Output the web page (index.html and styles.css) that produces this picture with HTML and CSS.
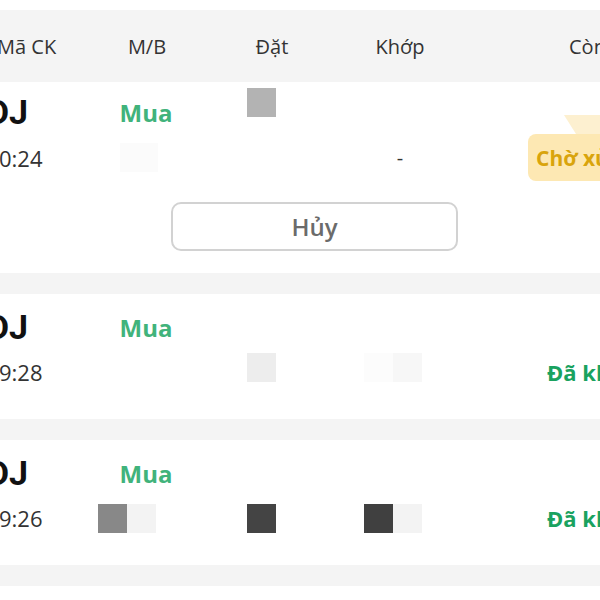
FILE: index.html
```
<!DOCTYPE html>
<html lang="vi">
<head>
<meta charset="utf-8">
<title>Sổ lệnh</title>
<link rel="stylesheet" href="styles.css">
</head>
<body>
<div class="page">
  <div class="table">
    <div class="head line">
      <div class="cell c1 h-sym">Mã CK</div>
      <div class="cell c2">M/B</div>
      <div class="cell c3">Đặt</div>
      <div class="cell c4">Khớp</div>
      <div class="cell c5 h-rest">Còn lại</div>
    </div>

    <div class="order first">
      <div class="line l1">
        <div class="cell c1 sym">DJ</div>
        <div class="cell c2 side">Mua</div>
        <div class="cell c3 masked"><span class="blk at-c3 up g-b3"></span></div>
        <div class="cell c4"></div>
        <div class="cell c5"></div>
      </div>
      <div class="line l2">
        <div class="cell c1 time">0:24</div>
        <div class="cell c2 masked"><span class="blk at-c2b g-fb wide"></span></div>
        <div class="cell c3"></div>
        <div class="cell c4 dash">-</div>
        <div class="cell c5"><span class="badge"><span class="tail"></span>Chờ xử lý</span></div>
      </div>
      <div class="actions"><button class="cancel" type="button">Hủy</button></div>
    </div>
    <div class="gap"></div>

    <div class="order">
      <div class="line l1">
        <div class="cell c1 sym">DJ</div>
        <div class="cell c2 side">Mua</div>
        <div class="cell c3"></div>
        <div class="cell c4"></div>
        <div class="cell c5"></div>
      </div>
      <div class="line l2">
        <div class="cell c1 time">9:28</div>
        <div class="cell c2"></div>
        <div class="cell c3 masked"><span class="blk at-c3 lift g-ed"></span></div>
        <div class="cell c4 masked"><span class="blk at-c4 lift g-fd"></span><span class="blk lift g-f7"></span></div>
        <div class="cell c5"><span class="status">Đã khớp</span></div>
      </div>
    </div>
    <div class="gap"></div>

    <div class="order">
      <div class="line l1">
        <div class="cell c1 sym">DJ</div>
        <div class="cell c2 side">Mua</div>
        <div class="cell c3"></div>
        <div class="cell c4"></div>
        <div class="cell c5"></div>
      </div>
      <div class="line l2">
        <div class="cell c1 time">9:26</div>
        <div class="cell c2 masked"><span class="blk at-c2 g-88"></span><span class="blk g-f3"></span></div>
        <div class="cell c3 masked"><span class="blk at-c3 g-44"></span></div>
        <div class="cell c4 masked"><span class="blk at-c4 g-40"></span><span class="blk g-f3"></span></div>
        <div class="cell c5"><span class="status">Đã khớp</span></div>
      </div>
    </div>
    <div class="gap"></div>
  </div>
</div>
</body>
</html>
```
FILE: styles.css
```
html, body {
  margin: 0;
  padding: 0;
  background: #ffffff;
}

body {
  font-family: "Open Sans", "Noto Sans", sans-serif;
  color: #333333;
}

.page {
  width: 600px;
  height: 600px;
  overflow: hidden;
  padding-top: 10px;
  box-sizing: border-box;
}

.table {
  width: 640px;
}

.line {
  display: grid;
  grid-template-columns: 96px 102px 148px 108px 186px;
}

.cell {
  display: flex;
  align-items: center;
  justify-content: center;
  white-space: nowrap;
  min-width: 0;
}

.c1 {
  justify-content: flex-start;
}

.c5 {
  justify-content: flex-start;
}

.head {
  height: 72px;
  background: #f4f4f4;
  font-size: 20px;
  color: #333333;
}

.h-sym {
  margin-left: -3px;
}

.h-rest {
  padding-left: 115px;
}

.order {
  background: #ffffff;
  padding: 11px 0 24px;
}

.order.first {
  padding: 8px 0 22px;
}

.l1 {
  height: 44px;
}

.l2 {
  height: 46px;
}

.sym {
  font-family: Roboto, "Open Sans", sans-serif;
  font-weight: 700;
  font-size: 34px;
  color: #111111;
  margin-left: -13px;
}

.side {
  font-weight: 700;
  font-size: 24px;
  color: #41b37b;
  margin-left: -2px;
}

.time {
  font-size: 22px;
  color: #333333;
  margin-left: -1px;
}

.dash {
  font-size: 20px;
  color: #333333;
}

.masked {
  justify-content: flex-start;
}

.blk {
  display: block;
  width: 29px;
  height: 29px;
  flex: none;
}

.blk.wide {
  width: 38px;
}

.at-c2 { margin-left: 2px; }
.at-c2b { margin-left: 24px; }
.at-c3 { margin-left: 49px; }
.at-c4 { margin-left: 18px; }

.up { margin-top: -20px; }
.lift { margin-top: -9px; }

.g-b3 { background: #b3b3b3; }
.g-fb { background: #fbfbfb; }
.g-ed { background: #ededed; }
.g-fd { background: #fcfcfc; }
.g-f7 { background: #f7f7f7; }
.g-88 { background: #888888; }
.g-f3 { background: #f3f3f3; }
.g-44 { background: #444444; }
.g-40 { background: #404040; }

.badge {
  position: relative;
  display: flex;
  align-items: center;
  height: 47px;
  margin-left: 74px;
  padding: 0 10px 0 8px;
  border-radius: 8px;
  background: #fde8b3;
  color: #d9a40c;
  font-weight: 700;
  font-size: 21px;
}

.tail {
  position: absolute;
  left: 36px;
  top: -19px;
  width: 90px;
  height: 19px;
  background: #fdf0d0;
  clip-path: polygon(0 0, 100% 0, 100% 100%, 12px 100%);
}

.status {
  margin-left: 93px;
  font-weight: 700;
  font-size: 22px;
  color: #1aa25f;
}

.actions {
  display: flex;
  margin-top: 22px;
  padding-left: 171px;
}

.cancel {
  width: 287px;
  height: 49px;
  box-sizing: border-box;
  border: 2px solid #d2d2d2;
  border-radius: 10px;
  background: #ffffff;
  font-family: "Open Sans", "Noto Sans", sans-serif;
  font-weight: 600;
  font-size: 24px;
  color: #6b6b6b;
  padding: 0;
}

.gap {
  height: 21px;
  background: #f4f4f4;
}
```
